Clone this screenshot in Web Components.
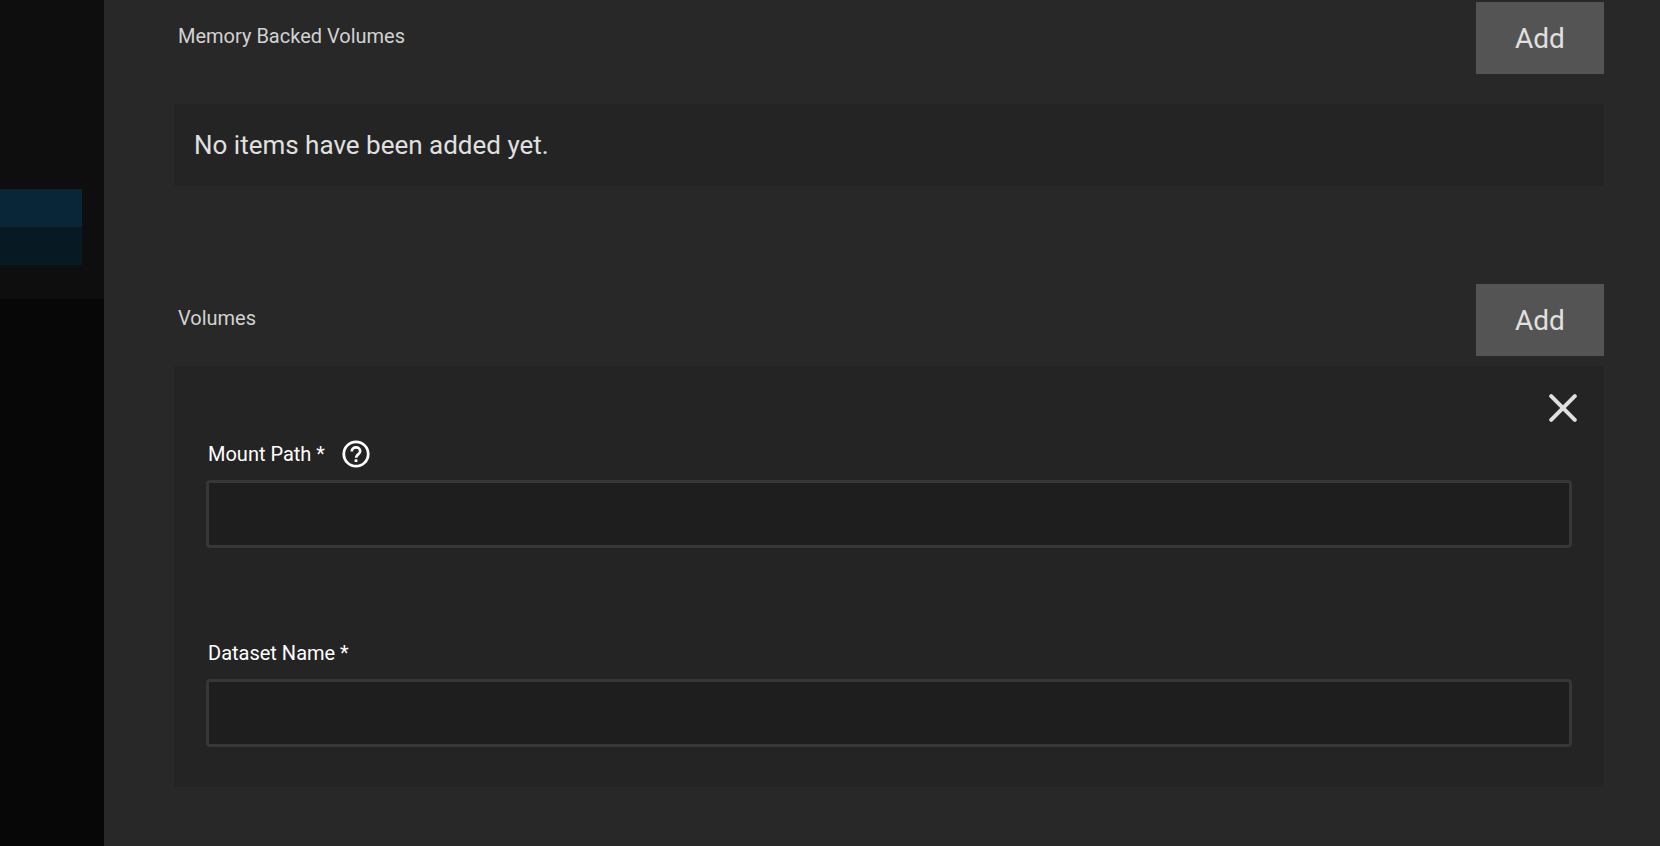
<!DOCTYPE html>
<html lang="en">
<head>
<meta charset="utf-8">
<meta name="viewport" content="width=device-width, initial-scale=1">
<title>Volumes</title>
<style>
  body { margin: 0; background: #282828; color: #e0e0e0; font-family: Roboto, "Noto Sans", sans-serif; }
</style>
</head>
<body>
<app-shell>
  <page-backdrop slot="backdrop"></page-backdrop>
  <form-section heading="Memory Backed Volumes">
    <list-empty>No items have been added yet.</list-empty>
  </form-section>
  <form-section heading="Volumes" filled>
    <list-item>
      <text-field label="Mount Path" help></text-field>
      <text-field label="Dataset Name"></text-field>
    </list-item>
  </form-section>
</app-shell>
<script>
const define = (name, html, setup) => {
  const template = document.createElement('template');
  template.innerHTML = html;
  customElements.define(name, class extends HTMLElement {
    constructor() {
      super();
      this.attachShadow({ mode: 'open' }).append(template.content.cloneNode(true));
    }
    connectedCallback() { if (setup) setup(this, this.shadowRoot); }
  });
};

define('app-shell', `
  <style>
    :host { display: grid; grid-template-columns: 104px minmax(0, 1fr); min-height: 100vh; }
    main { background: #282828; padding: 2px 56px 56px 70px; display: flex; flex-direction: column; gap: 98px; }
  </style>
  <slot name="backdrop"></slot>
  <main><slot></slot></main>`);

define('page-backdrop', `
  <style>
    :host { display: block; background: #070707; }
    .card { background: #0e0e0e; padding: 189px 22px 34px 0; }
    .row { height: 38px; background: #071923; }
    .row:first-child { background: #082637; }
  </style>
  <div class="card"><div class="row"></div><div class="row"></div></div>`);

define('form-section', `
  <style>
    :host { display: flex; flex-direction: column; gap: 30px; }
    :host([filled]) { gap: 10px; }
    header { display: flex; justify-content: space-between; }
    h2 { margin: 0; padding: 20px 4px 0; font-size: 20px; line-height: 28px; font-weight: 400; color: #d2d2d2; }
    button { width: 128px; height: 72px; border: 0; padding: 0; background: #545454; color: #e0e0e0; font: inherit; font-size: 28px; }
  </style>
  <header><h2></h2><button type="button">Add</button></header>
  <slot></slot>`,
  (el, root) => { root.querySelector('h2').textContent = el.getAttribute('heading'); });

define('list-empty', `
  <style>
    :host { display: block; background: #242424; padding: 21px 20px; font-size: 26px; line-height: 40px; }
  </style>
  <slot></slot>`);

define('list-item', `
  <style>
    :host { display: flex; flex-direction: column; background: #242424; padding: 24px 32px 40px; }
    button { align-self: flex-end; width: 36px; height: 36px; margin-right: -9px; padding: 0; border: 0; background: none; color: #e0e0e0; display: grid; place-items: center; }
    .fields { display: flex; flex-direction: column; gap: 89px; padding-top: 12px; }
  </style>
  <button type="button" aria-label="Remove"><svg width="28" height="28" viewBox="0 0 28 28" fill="none" stroke="currentColor" stroke-width="4" stroke-linecap="round"><path d="M2.2 2.2l23.6 23.6M25.8 2.2L2.2 25.8"/></svg></button>
  <div class="fields"><slot></slot></div>`);

define('text-field', `
  <style>
    :host { display: flex; flex-direction: column; gap: 10px; }
    .caption { display: flex; align-items: center; gap: 17px; padding-left: 2px; height: 32px; color: #fff; font-size: 20px; line-height: 28px; }
    .help { display: none; width: 28px; height: 28px; padding: 0; border: 0; background: none; color: #fff; }
    :host([help]) .help { display: block; }
    svg { display: block; }
    input { box-sizing: border-box; width: 100%; height: 68px; border: 3px solid #373737; border-radius: 4px; background: #1e1e1e; color: #fff; padding: 0 16px; font: inherit; font-size: 26px; }
  </style>
  <div class="caption">
    <label for="field"></label>
    <button class="help" type="button" aria-label="Help"><svg width="28" height="28" viewBox="0 0 28 28" fill="none" stroke="currentColor"><circle cx="14" cy="14" r="12.2" stroke-width="2.8"/><path d="M9.8 11.4c0-2.4 1.8-4 4.2-4s4.2 1.6 4.2 3.8c0 3-4.2 3.4-4.2 6.6" stroke-width="2.7"/><path d="M14 19.3v2.7" stroke-width="2.8"/></svg></button>
  </div>
  <input id="field" type="text" required>`,
  (el, root) => { root.querySelector('label').textContent = el.getAttribute('label') + ' *'; });
</script>
</body>
</html>
